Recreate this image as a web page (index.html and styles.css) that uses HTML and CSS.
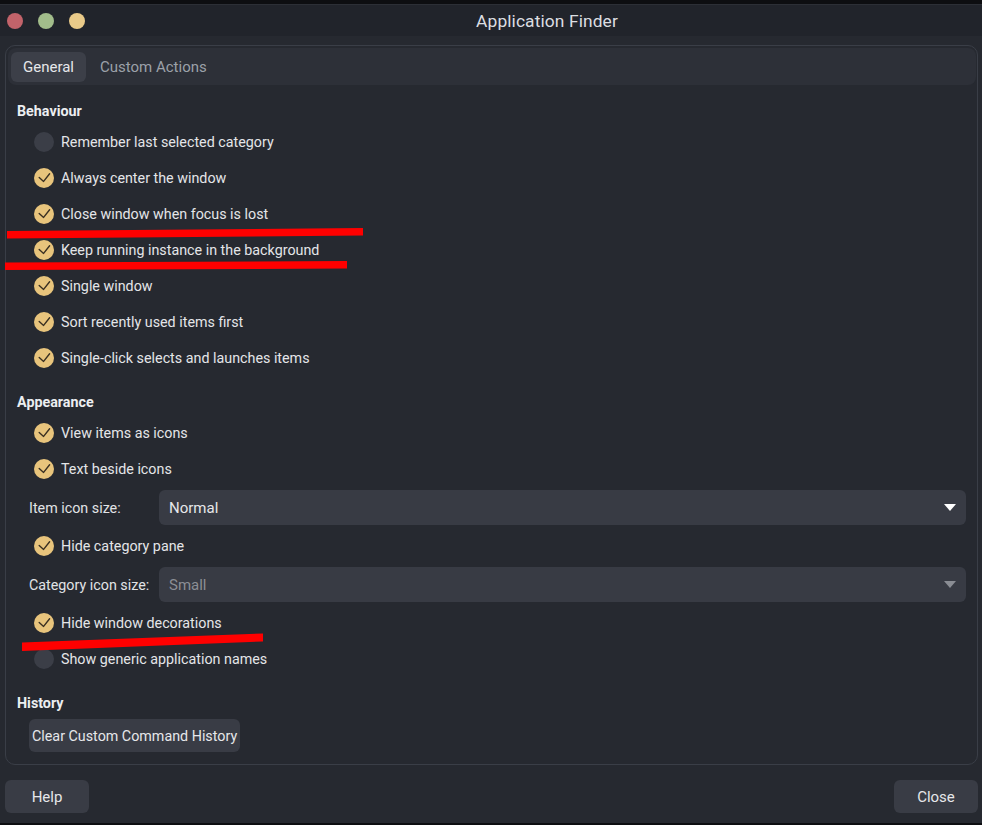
FILE: index.html
```html
<!DOCTYPE html>
<html lang="en">
<head>
<meta charset="utf-8">
<title>Application Finder</title>
<link rel="stylesheet" href="styles.css">
</head>
<body>
<div class="window">
  <header class="titlebar">
    <div class="lights">
      <span class="light red"></span>
      <span class="light green"></span>
      <span class="light yellow"></span>
    </div>
    <div class="title">Application Finder</div>
  </header>

  <main class="content">
    <section class="notebook">
      <nav class="tabs">
        <span class="tab active">General</span>
        <span class="tab">Custom Actions</span>
      </nav>

      <div class="page">
        <h2 class="heading">Behaviour</h2>
        <label class="check"><span class="box"></span>Remember last selected category</label>
        <label class="check"><span class="box on"><svg viewBox="0 0 20 20"><path d="M5.2 9.4 L9.6 13.4 L15.6 5.8"/></svg></span>Always center the window</label>
        <label class="check"><span class="box on"><svg viewBox="0 0 20 20"><path d="M5.2 9.4 L9.6 13.4 L15.6 5.8"/></svg></span>Close window when focus is lost</label>
        <label class="check"><span class="box on"><svg viewBox="0 0 20 20"><path d="M5.2 9.4 L9.6 13.4 L15.6 5.8"/></svg></span>Keep running instance in the background</label>
        <label class="check"><span class="box on"><svg viewBox="0 0 20 20"><path d="M5.2 9.4 L9.6 13.4 L15.6 5.8"/></svg></span>Single window</label>
        <label class="check"><span class="box on"><svg viewBox="0 0 20 20"><path d="M5.2 9.4 L9.6 13.4 L15.6 5.8"/></svg></span>Sort recently used items first</label>
        <label class="check"><span class="box on"><svg viewBox="0 0 20 20"><path d="M5.2 9.4 L9.6 13.4 L15.6 5.8"/></svg></span>Single-click selects and launches items</label>

        <h2 class="heading">Appearance</h2>
        <label class="check"><span class="box on"><svg viewBox="0 0 20 20"><path d="M5.2 9.4 L9.6 13.4 L15.6 5.8"/></svg></span>View items as icons</label>
        <label class="check"><span class="box on"><svg viewBox="0 0 20 20"><path d="M5.2 9.4 L9.6 13.4 L15.6 5.8"/></svg></span>Text beside icons</label>
        <div class="combo-row">
          <span class="combo-label">Item icon size:</span>
          <div class="combo"><span>Normal</span><svg class="arrow" viewBox="0 0 12 7"><path d="M0 0 H12 L6 7 Z"/></svg></div>
        </div>
        <label class="check"><span class="box on"><svg viewBox="0 0 20 20"><path d="M5.2 9.4 L9.6 13.4 L15.6 5.8"/></svg></span>Hide category pane</label>
        <div class="combo-row">
          <span class="combo-label">Category icon size:</span>
          <div class="combo disabled"><span>Small</span><svg class="arrow" viewBox="0 0 12 7"><path d="M0 0 H12 L6 7 Z"/></svg></div>
        </div>
        <label class="check"><span class="box on"><svg viewBox="0 0 20 20"><path d="M5.2 9.4 L9.6 13.4 L15.6 5.8"/></svg></span>Hide window decorations</label>
        <label class="check"><span class="box"></span>Show generic application names</label>

        <h2 class="heading">History</h2>
        <div class="history-row">
          <button class="btn">Clear Custom Command History</button>
        </div>
      </div>
    </section>

    <footer class="actions">
      <button class="btn wide">Help</button>
      <button class="btn wide">Close</button>
    </footer>
  </main>
</div>

<svg class="marks" viewBox="0 0 982 825" width="982" height="825">
  <polygon points="7,231 363,228 363,235.5 7,238.5"/>
  <polygon points="5,262.5 347,261 347,268.5 5,270"/>
  <polygon points="22,642.5 263,633.5 263,641.5 22,651"/>
</svg>
</body>
</html>
```

FILE: styles.css
```css
* { box-sizing: border-box; }

html, body {
  margin: 0;
  padding: 0;
  width: 982px;
  height: 825px;
  overflow: hidden;
  background: #0d0e11;
}

body {
  position: relative;
  font-family: Roboto, "Noto Sans", sans-serif;
  font-size: 14.3px;
  color: #e4e5e8;
}

.window {
  margin-top: 4px;
  height: 819px;
  background: #262930;
  border-top: 1px solid #2c2f36;
  display: flex;
  flex-direction: column;
}

.titlebar {
  height: 31px;
  background: #21242b;
  display: flex;
  align-items: center;
  flex: none;
}

.lights {
  display: flex;
  gap: 15px;
  padding-left: 7px;
  flex: none;
}

.light {
  width: 16px;
  height: 16px;
  border-radius: 50%;
  display: block;
}
.light.red { background: #c2636a; }
.light.green { background: #a2bd8b; }
.light.yellow { background: #e9ca89; }

.title {
  flex: 1;
  text-align: center;
  margin-left: -85px;
  padding-left: 112px;
  color: #dcdee2;
  font-size: 17.4px;
  letter-spacing: 0.1px;
}

.content {
  flex: 1;
  padding: 9px 4px 0 5px;
  display: flex;
  flex-direction: column;
}

.notebook {
  height: 720px;
  border: 1px solid #3a3e47;
  border-radius: 10px;
  padding: 2px 1px 0 2px;
  display: flex;
  flex-direction: column;
}

.tabs {
  height: 37px;
  background: #2d3038;
  border-radius: 8px;
  display: flex;
  align-items: center;
  padding-left: 3px;
  gap: 2px;
  flex: none;
}

.tab {
  height: 30px;
  line-height: 30px;
  padding: 0 12px;
  border-radius: 6px;
  color: #9ca1a9;
  font-size: 15px;
}
.tab.active {
  background: #3c3f48;
  color: #e6e7ea;
}

.page {
  padding: 13px 10px 0 9px;
  display: flex;
  flex-direction: column;
}

.heading {
  margin: 0;
  height: 26px;
  line-height: 26px;
  font-size: 14.3px;
  font-weight: 700;
  color: #eceef1;
}
.check + .heading,
.history-row + .heading { margin-top: 13px; }

.check {
  height: 36px;
  display: flex;
  align-items: center;
  padding-left: 17px;
  gap: 7px;
}

.box {
  width: 20px;
  height: 20px;
  border-radius: 50%;
  background: #3b3e47;
  flex: none;
  display: block;
}
.box.on { background: #e8c47c; }
.box svg {
  width: 20px;
  height: 20px;
  display: block;
}
.box path {
  fill: none;
  stroke: #3a3022;
  stroke-width: 1.4;
  stroke-linecap: round;
  stroke-linejoin: round;
}

.combo-row {
  display: grid;
  grid-template-columns: 130px 1fr;
  align-items: center;
  margin: 3px 0;
  padding-left: 12px;
}

.combo-label { color: #e1e3e6; }

.combo {
  height: 35px;
  border-radius: 6px;
  background: #383b44;
  display: flex;
  align-items: center;
  justify-content: space-between;
  padding: 0 10px 0 10px;
  color: #e6e7ea;
  font-size: 15px;
}
.combo.disabled { color: #8b8e95; }

.arrow {
  width: 12px;
  height: 7px;
  fill: #ffffff;
}
.combo.disabled .arrow { fill: #8a8d94; }

.history-row {
  padding: 3px 0 0 12px;
}

.btn {
  font: inherit;
  color: #e6e7ea;
  background: #393c45;
  border: none;
  border-radius: 6px;
  height: 33px;
  padding: 0 3px;
}

.actions {
  display: flex;
  justify-content: space-between;
  padding: 15px 0 0 0;
}
.btn.wide { width: 84px; font-size: 15px; }

.marks {
  position: absolute;
  top: 0;
  left: 0;
  pointer-events: none;
}
.marks polygon { fill: #ff0000; }
```
